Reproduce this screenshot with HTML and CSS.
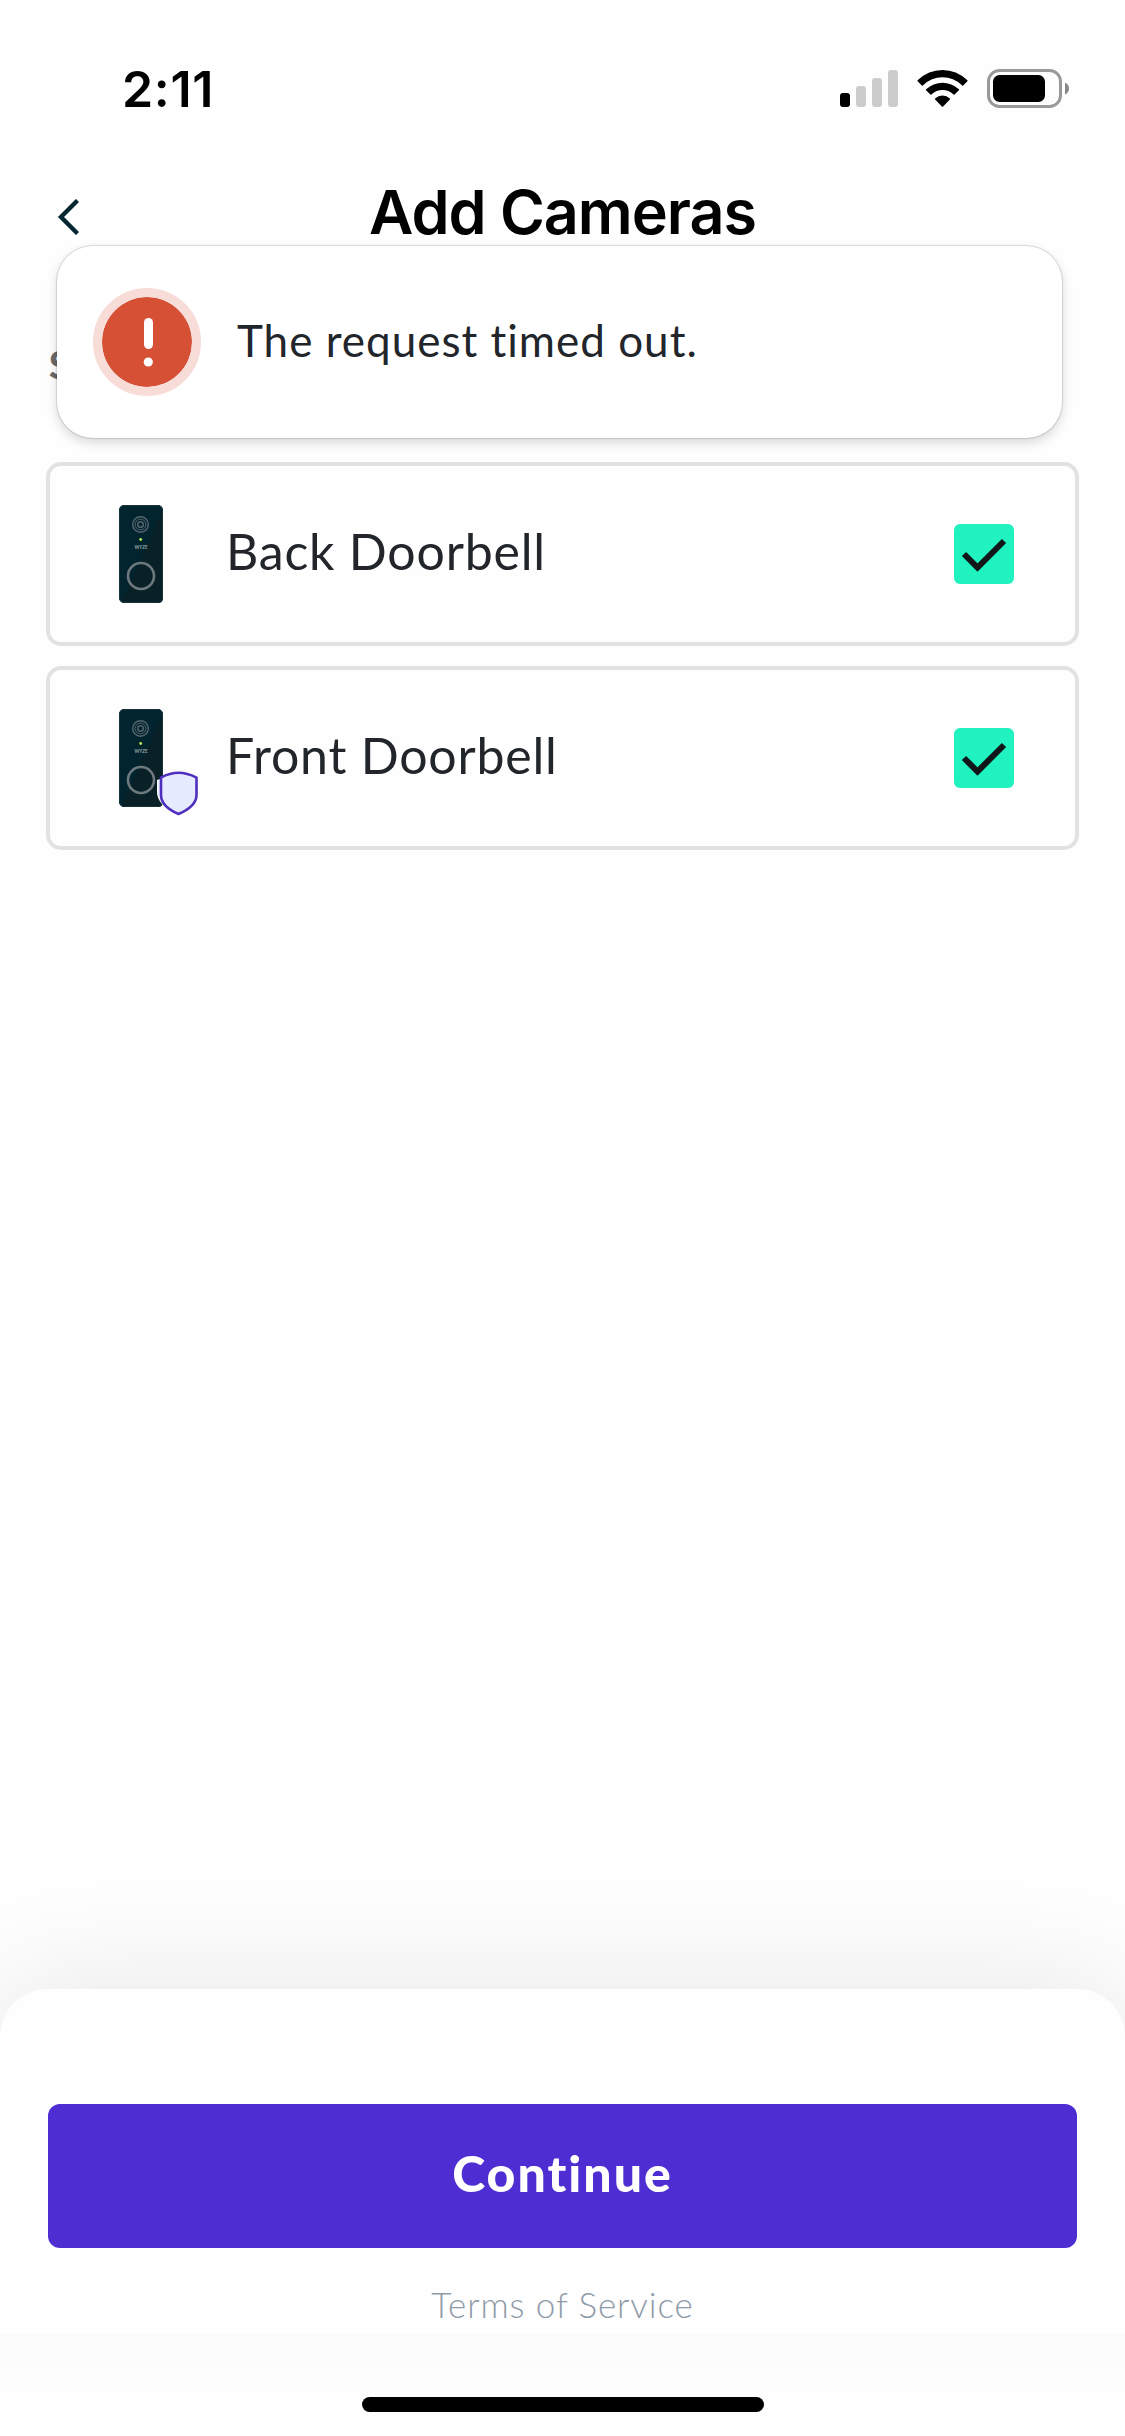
FILE: index.html
```
<!DOCTYPE html>
<html lang="en">
<head>
    <meta charset="UTF-8">
    <meta name="viewport" content="width=device-width, initial-scale=1.0">
    <title>Add Cameras</title>
    <link rel="stylesheet" href="styles.css">
</head>
<body>
    <div class="screen">
        <header class="status-bar">
            <div class="time">2:11</div>
            <div class="status-icons">
                <svg class="signal" width="58" height="37" viewBox="0 0 58 37">
                    <rect x="0" y="23" width="10" height="14" rx="3" fill="#000"/>
                    <rect x="16" y="16" width="10" height="21" rx="3" fill="#ccc"/>
                    <rect x="32" y="8" width="10" height="29" rx="3" fill="#ccc"/>
                    <rect x="48" y="0" width="10" height="37" rx="3" fill="#ccc"/>
                </svg>
                <svg class="wifi" width="51" height="37" viewBox="0 0 51 37">
                    <path d="M0.6 10.2Q11.5 0 25.5 0T50.4 10.2Q50.8 10.7 50.4 11.2L46.2 15.4Q45.7 15.9 45.2 15.4Q36.5 7.3 25.5 7.3T5.8 15.4Q5.3 15.9 4.8 15.4L.6 11.2Q.2 10.7 .6 10.2Z"/>
                    <path d="M9.1 19.2Q16.3 12.7 25.5 12.7T41.9 19.2Q42.4 19.7 41.9 20.2L37.6 24.5Q37.1 25 36.6 24.5Q31.7 20.1 25.5 20.1T14.4 24.5Q13.9 25 13.4 24.5L9.1 20.2Q8.6 19.7 9.1 19.2Z"/>
                    <path d="M18.1 28.4Q21.3 25.5 25.5 25.5T32.9 28.4Q33.4 28.9 32.9 29.4L26.1 36.4Q25.5 37 24.9 36.4L18.1 29.4Q17.6 28.9 18.1 28.4Z"/>
                </svg>
                <svg class="battery" width="82" height="39" viewBox="0 0 82 39">
                    <rect x="1.5" y="1.5" width="72" height="36" rx="11" fill="none" stroke="#999" stroke-width="3"/>
                    <rect x="6" y="6" width="52" height="27" rx="6.5" fill="#000"/>
                    <path d="M78 13.5Q82 15.5 82 19.5T78 25.5Z" fill="#888"/>
                </svg>
            </div>
        </header>

        <nav class="nav-bar">
            <svg class="back" width="22" height="36" viewBox="0 0 22 36">
                <path d="M20.5 1.5L4 18L20.5 34.5" fill="none" stroke="#052830" stroke-width="4.4"/>
            </svg>
            <h1 class="title">Add Cameras</h1>
        </nav>

        <div class="toast">
            <div class="alert-icon">
                <svg width="90" height="90" viewBox="0 0 90 90">
                    <rect x="42" y="21" width="9" height="31" rx="4.5" fill="#fff"/>
                    <circle cx="46.3" cy="65" r="4.6" fill="#fff"/>
                </svg>
            </div>
            <div class="toast-text">The request timed out.</div>
        </div>

        <main class="content">
            <h2 class="section-label">S</h2>
            <div class="camera-list">
                <div class="camera">
                    <div class="camera-icon">
                        <svg width="44" height="98" viewBox="0 0 44 98">
                            <rect width="44" height="98" rx="5" fill="#02242f"/>
                            <path d="M44 4V93Q44 98 39 98H3Z" fill="#0a2027"/>
                            <rect x=".5" y=".5" width="43" height="97" rx="5" fill="none" stroke="#17343c"/>
                            <g fill="none" stroke="#55666d">
                                <circle cx="21.5" cy="19.5" r="7.8" stroke-width="1.4"/>
                                <circle cx="21.5" cy="19.5" r="5.4"/>
                                <circle cx="21.5" cy="19.5" r="2.8" stroke-width="1.4"/>
                            </g>
                            <circle cx="21.7" cy="34.5" r="1.4" fill="#b5e85b"/>
                            <text class="brand" x="22" y="44" text-anchor="middle" textLength="13" lengthAdjust="spacingAndGlyphs">WYZE</text>
                            <circle cx="22" cy="71" r="13" fill="none" stroke="#6e797e" stroke-width="2.6"/>
                        </svg>
                    </div>
                    <div class="camera-name">Back Doorbell</div>
                    <div class="checkbox">
                        <svg width="60" height="60" viewBox="0 0 60 60">
                            <path d="M10 30L23.5 43.5L50 17" fill="none" stroke="#111618" stroke-width="6"/>
                        </svg>
                    </div>
                </div>
                <div class="camera">
                    <div class="camera-icon">
                        <svg width="44" height="98" viewBox="0 0 44 98">
                            <rect width="44" height="98" rx="5" fill="#02242f"/>
                            <path d="M44 4V93Q44 98 39 98H3Z" fill="#0a2027"/>
                            <rect x=".5" y=".5" width="43" height="97" rx="5" fill="none" stroke="#17343c"/>
                            <g fill="none" stroke="#55666d">
                                <circle cx="21.5" cy="19.5" r="7.8" stroke-width="1.4"/>
                                <circle cx="21.5" cy="19.5" r="5.4"/>
                                <circle cx="21.5" cy="19.5" r="2.8" stroke-width="1.4"/>
                            </g>
                            <circle cx="21.7" cy="34.5" r="1.4" fill="#b5e85b"/>
                            <text class="brand" x="22" y="44" text-anchor="middle" textLength="13" lengthAdjust="spacingAndGlyphs">WYZE</text>
                            <circle cx="22" cy="71" r="13" fill="none" stroke="#6e797e" stroke-width="2.6"/>
                        </svg>
                        <svg class="shield" width="42" height="46" viewBox="0 0 42 46">
                            <path d="M0 10Q10 8 19 3V45Q0 34 0 22Z" fill="#fff"/>
                            <path d="M1 11Q12 9 20 4V43Q1 34 1 22Z" fill="#e6ebff"/>
                            <path d="M21.5 2.8Q30 2.8 39.5 7.6V25C39.5 33 32 39.5 21.5 44C11 39.5 4 33 4 25V7.6Q13 2.8 21.5 2.8Z" fill="#e6ebff" stroke="#4f2fbd" stroke-width="2.6" stroke-linejoin="round"/>
                        </svg>
                    </div>
                    <div class="camera-name">Front Doorbell</div>
                    <div class="checkbox">
                        <svg width="60" height="60" viewBox="0 0 60 60">
                            <path d="M10 30L23.5 43.5L50 17" fill="none" stroke="#111618" stroke-width="6"/>
                        </svg>
                    </div>
                </div>
            </div>
        </main>

        <section class="sheet">
            <button class="continue">Continue</button>
            <a class="terms">Terms of Service</a>
        </section>
        <footer class="home-area">
            <div class="home-indicator"></div>
        </footer>
    </div>
</body>
</html>
```
FILE: styles.css
```
* {
    margin: 0;
    padding: 0;
    box-sizing: border-box;
}
body {
    font-family: 'Lato', sans-serif;
    color: #22262b;
    background: #fefefe;
}
svg {
    display: block;
}
.screen {
    position: relative;
    display: flex;
    flex-direction: column;
    width: 1125px;
    height: 2436px;
    overflow: hidden;
}

/* Status bar */
.status-bar {
    display: flex;
    justify-content: space-between;
    height: 132px;
    padding: 59px 56px 0 122px;
}
.time {
    font-family: 'Inter', sans-serif;
    font-size: 50px;
    font-weight: 600;
    line-height: 60px;
    letter-spacing: 0.7px;
    color: #000;
}
.status-icons {
    display: flex;
    align-items: flex-start;
    padding-top: 10px;
}
.signal {
    margin: 1px 19px 0 0;
}
.wifi {
    margin: 1px 19px 0 0;
}

/* Navigation */
.nav-bar {
    display: flex;
    height: 113px;
    padding: 0 57px;
}
.back {
    margin-top: 67px;
}
.title {
    flex: 1;
    margin-right: 22px;
    padding-top: 43px;
    font-family: 'Inter', sans-serif;
    font-size: 61px;
    font-weight: 600;
    line-height: 74px;
    letter-spacing: -1px;
    text-align: center;
    color: #000;
}

/* Toast lies over the section label */
.toast {
    position: absolute;
    top: 246px;
    left: 57px;
    z-index: 2;
    display: flex;
    align-items: center;
    width: 1005px;
    height: 192px;
    padding-left: 36px;
    background: #fff;
    border-radius: 36px;
    box-shadow: 0 0 1px 1px rgba(0, 0, 0, 0.13), 0 5px 12px rgba(0, 0, 0, 0.15);
}
.alert-icon {
    width: 108px;
    height: 108px;
    border: 9px solid #f8dcd8;
    border-radius: 50%;
    background: #d65036;
    background-clip: padding-box;
}
.toast-text {
    margin-left: 36px;
    padding-bottom: 4px;
    font-size: 44px;
    line-height: 60px;
    letter-spacing: 1px;
}

/* Camera list */
.content {
    flex: 1;
    padding: 96px 46px 0;
}
.section-label {
    height: 121px;
    padding-left: 3px;
    font-size: 37px;
    font-weight: 900;
    line-height: 48px;
    color: #6b6b6b;
}
.camera-list {
    display: flex;
    flex-direction: column;
    gap: 20px;
}
.camera {
    display: flex;
    align-items: center;
    height: 184px;
    padding: 0 61px 0 69px;
    border: 4px solid #e2e2e2;
    border-radius: 15px;
}
.camera-icon {
    position: relative;
    width: 44px;
}
.camera-name {
    flex: 1;
    margin-left: 63px;
    padding-bottom: 7px;
    font-size: 50px;
    line-height: 60px;
    letter-spacing: 0.8px;
}
.checkbox {
    width: 60px;
    height: 60px;
    border-radius: 6px;
    background: #20f2c0;
}
.shield {
    position: absolute;
    left: 38px;
    top: 61px;
}
.brand {
    font-size: 5px;
    font-weight: 700;
    fill: #9aa5a9;
}

/* Bottom sheet */
.sheet {
    display: flex;
    flex-direction: column;
    align-items: center;
    height: 345px;
    padding: 115px 48px 0;
    background: #fefefe;
    border-radius: 48px 48px 0 0;
    box-shadow: 0 0 120px rgba(0, 0, 0, 0.1);
}
.continue {
    width: 1029px;
    height: 144px;
    padding-bottom: 6px;
    border: none;
    border-radius: 12px;
    background: #4e2ed2;
    font-family: 'Lato', sans-serif;
    font-size: 50px;
    font-weight: 900;
    letter-spacing: 2px;
    color: #fff;
}
.terms {
    margin-top: 32px;
    font-size: 35px;
    font-weight: 300;
    line-height: 48px;
    letter-spacing: 0.9px;
    color: #8f9ba8;
}
.home-area {
    height: 102px;
    padding-top: 63px;
    background: linear-gradient(#fbfbfb, #fefefe 60px);
}
.home-indicator {
    width: 402px;
    height: 15px;
    margin: 0 auto;
    border-radius: 8px;
    background: #000;
}
```
